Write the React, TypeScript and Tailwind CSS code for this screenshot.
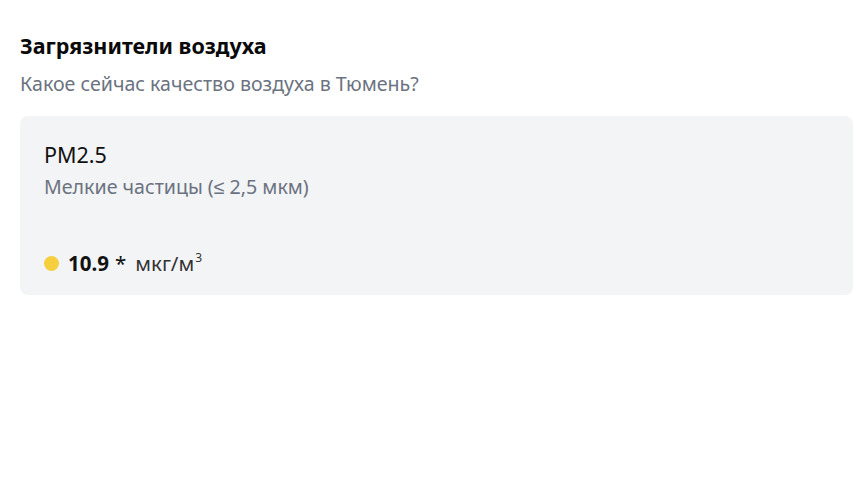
import React from 'react';

const App: React.FC = () => {
  return (
    <div className="min-h-[492px] w-full bg-white pl-5 pt-[30px] font-['Noto_Sans',sans-serif]">
      {/* заголовок */}
      <h2 className="text-[21.5px] font-bold leading-[32px] text-[#0a0a0a]">Загрязнители воздуха</h2>
      <p className="mt-[8px] text-[19.6px] leading-[28px] text-[#6b7280]">
        Какое сейчас качество воздуха в Тюмень?
      </p>

      {/* карточка */}
      <div className="mt-[18px] h-[179px] rounded-lg bg-[#f3f4f6] px-6 pt-[24px]">
        <div className="text-[21.5px] leading-[30px] text-[#111]">PM2.5</div>
        <div className="mt-[3px] text-[19.6px] leading-[28px] text-[#6b7280]">
          Мелкие частицы (≤ 2,5 мкм)
        </div>
        <div className="mt-[48px] flex items-center">
          <span className="mr-[9px] h-[15px] w-[15px] rounded-full bg-[#f6cf3e]" />
          <span className="text-[20.5px] font-bold leading-[28px] text-[#111]">10.9</span>
          <span className="ml-[6px] text-[20.5px] leading-[28px] text-[#111]">*</span>
          <span className="ml-[9px] text-[20.5px] leading-[28px] text-[#333]">
            мкг/м<sup className="-top-[9px] ml-[1px] text-[12px]">3</sup>
          </span>
        </div>
      </div>
    </div>
  );
};

export default App;
